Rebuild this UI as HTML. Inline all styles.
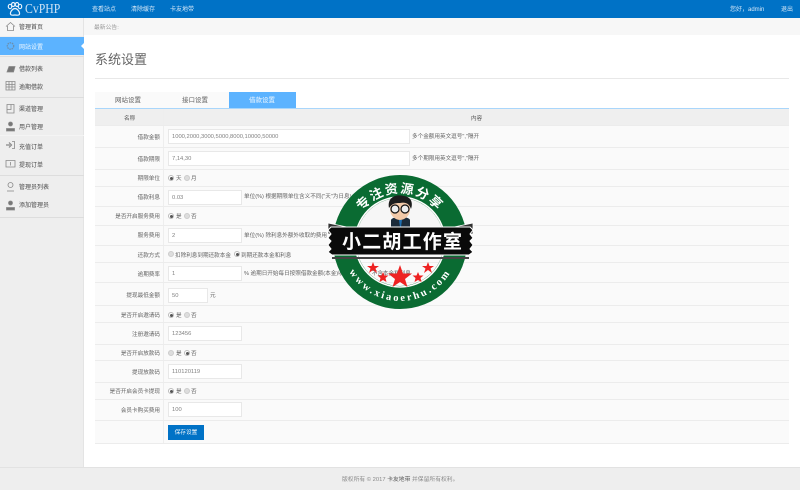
<!DOCTYPE html>
<html lang="zh"><head><meta charset="utf-8"><title>系统设置</title>
<style>
*{box-sizing:border-box}
html,body{margin:0;padding:0}
html{background:#fff}
body{width:800px;height:490px;overflow:hidden;position:relative;background:#fff;font-family:"Liberation Sans","Noto Sans CJK SC",sans-serif;font-size:5.6px;color:#777;filter:blur(.3px)}
div,span,i,b{position:absolute;white-space:nowrap;font-style:normal;font-weight:normal}
#top{left:0;top:0;width:800px;height:18px;background:#0072c6}
.n{top:6px;color:#d5e7f7;font-size:6px;line-height:8px}
#side{left:0;top:18px;width:84px;height:449px;background:#eee;border-right:1px solid #e4e4e4}
.s{left:19px;font-size:6px;line-height:8px;color:#4a4a4a;transform:translateY(1px)}
.sep{left:0;width:84px;height:1px;background:#ddd}
.r{left:95px;width:694px;background:#fafafa;border-bottom:1px solid #ececec}
.r .c{left:68px;top:0;bottom:0;width:1px;background:#eee}
.inp{left:168px;height:15px;background:#fff;border:1px solid #e8e8e8;color:#808080;padding-left:3px;line-height:14px;font-size:5.8px}
.t{color:#626262;line-height:8px;font-size:5.6px;transform:translateY(1px)}
.rd{width:6px;height:6px;border-radius:50%;background:#ddd;border:1px solid #ccc}
.on{background:#fff;border:1px solid #bbb}
.on:after{content:"";position:absolute;left:.5px;top:.5px;width:3px;height:3px;border-radius:50%;background:#555}
</style></head><body>
<div id="top"></div>
<svg style="position:absolute;left:7px;top:2px" width="16" height="15" viewBox="0 0 16 15" fill="none" stroke="#e8f2fb" stroke-width="1.2"><ellipse cx="3" cy="4.5" rx="1.7" ry="2.2"/><ellipse cx="6.2" cy="2.5" rx="1.7" ry="2"/><ellipse cx="10" cy="2.5" rx="1.7" ry="2"/><ellipse cx="13" cy="4.5" rx="1.7" ry="2.2"/><path d="M8 6.5C5.5 6.5 3 10 3.5 12C4 14 6.5 13 8 13C9.5 13 12 14 12.5 12C13 10 10.5 6.5 8 6.5Z"/></svg>
<span style="left:25px;top:1px;font:14px/17px 'Liberation Serif',serif;color:#cfe3f5;transform:scaleX(.84);transform-origin:left center">CvPHP</span>
<span class="n" style="left:92px">查看站点</span><span class="n" style="left:131px">清除缓存</span><span class="n" style="left:170px">卡友地带</span>
<span class="n" style="left:730px">您好，admin</span><span class="n" style="left:781px">退出</span>

<div id="side"></div>
<div style="left:0;top:18px;width:83px;height:18px;background:#f5f5f5"></div>
<div style="left:0;top:37px;width:84px;height:18px;background:#5cb3ff"></div>
<div style="left:81px;top:43px;width:0;height:0;border:3px solid transparent;border-right-color:#fff;border-left:0"></div>
<div class="sep" style="top:56px"></div><div class="sep" style="top:97px"></div><div class="sep" style="top:135px;background:#f4f4f4"></div><div class="sep" style="top:175px"></div><div class="sep" style="top:217px"></div>

<span class="s" style="top:23px">管理首页</span>
<span class="s" style="top:43px;color:#eef7ff">网站设置</span>
<span class="s" style="top:65px">借款列表</span>
<span class="s" style="top:83px">逾期借款</span>
<span class="s" style="top:105px">渠道管理</span>
<span class="s" style="top:123px">用户管理</span>
<span class="s" style="top:143px">充值订单</span>
<span class="s" style="top:161px">提现订单</span>
<span class="s" style="top:183px">管理员列表</span>
<span class="s" style="top:201px">添加管理员</span>

<svg style="position:absolute;left:5px;top:21px" width="11" height="200" viewBox="0 0 11 200" fill="none" stroke="#888" stroke-width=".8">
<path d="M1 5.5L5.5 1.5L10 5.5M2.5 5V9.5H8.5V5"/>
<circle cx="5.5" cy="25" r="3.2" stroke="#6b8fae" stroke-dasharray="1.5 .8" stroke-width="1.3"/>
<path d="M2 51L4 45.5H10L8.5 51Z" fill="#777"/>
<path d="M1 60.5H10V69H1ZM1 63.5H10M1 66H10M4 60.5V69M7 60.5V69"/>
<path d="M2 83.5H9V92H2ZM2 88.5H6V83.5"/>
<circle cx="5.5" cy="103" r="2" fill="#777"/><path d="M1.5 110V107.5H9.5V110Z" fill="#777"/>
<path d="M1 124H5M4 121.5L6.5 124L4 126.5" stroke-width="1.2"/><path d="M7 120.5H9.5V127.5H7"/>
<path d="M1 139.5H10V146H1ZM5.5 141V144.5"/>
<circle cx="5.5" cy="164" r="2.5"/><path d="M2 170H9"/>
<circle cx="5.5" cy="182" r="2" fill="#777"/><path d="M1.5 189V186.5H9.5V189Z" fill="#777"/>
</svg>

<div style="left:84px;top:18px;width:716px;height:17px;background:#f7f7f7"></div>
<span style="left:94px;top:24px;color:#999;line-height:8px;font-size:5.8px">最新公告:</span>
<span style="left:95px;top:51px;font-size:13px;line-height:17px;color:#666">系统设置</span>
<div style="left:95px;top:78px;width:694px;height:1px;background:#e8e8e8"></div>

<div style="left:95px;top:92px;width:134px;height:16px;background:#fafafa"></div>
<div style="left:229px;top:92px;width:67px;height:16px;background:#5cb3ff"></div>
<div style="left:95px;top:108px;width:694px;height:1px;background:#a9d6fb"></div>
<span class="t" style="left:115px;top:96px;font-size:6.5px">网站设置</span><span class="t" style="left:182px;top:96px;font-size:6.5px">接口设置</span><span style="left:249px;top:97px;color:#eef7ff;line-height:8px;font-size:6.5px">借款设置</span>

<div class="r" style="top:109px;height:17px;background:#efefef"><div class="c"></div></div>
<div class="r" style="top:126px;height:22px"><div class="c"></div></div>
<div class="r" style="top:148px;height:22px"><div class="c"></div></div>
<div class="r" style="top:170px;height:17px"><div class="c"></div></div>
<div class="r" style="top:187px;height:20px"><div class="c"></div></div>
<div class="r" style="top:207px;height:19px"><div class="c"></div></div>
<div class="r" style="top:226px;height:20px"><div class="c"></div></div>
<div class="r" style="top:246px;height:17px"><div class="c"></div></div>
<div class="r" style="top:263px;height:20px"><div class="c"></div></div>
<div class="r" style="top:283px;height:23px"><div class="c"></div></div>
<div class="r" style="top:306px;height:17px"><div class="c"></div></div>
<div class="r" style="top:323px;height:22px"><div class="c"></div></div>
<div class="r" style="top:345px;height:16px"><div class="c"></div></div>
<div class="r" style="top:361px;height:22px"><div class="c"></div></div>
<div class="r" style="top:383px;height:17px"><div class="c"></div></div>
<div class="r" style="top:400px;height:21px"><div class="c"></div></div>
<div class="r" style="top:421px;height:23px"><div class="c"></div></div>

<span class="t" style="left:124px;top:114px;color:#505050">名称</span>
<span class="t" style="left:471px;top:114px;color:#505050">内容</span>

<span class="t" style="right:640px;top:133px">借款金额</span>
<div class="inp" style="top:129px;width:242px">1000,2000,3000,5000,8000,10000,50000</div>
<span class="t" style="left:412px;top:132px">多个金额用英文逗号","隔开</span>

<span class="t" style="right:640px;top:155px">借款期限</span>
<div class="inp" style="top:151px;width:242px">7,14,30</div>
<span class="t" style="left:412px;top:154px">多个期限用英文逗号","隔开</span>

<span class="t" style="right:640px;top:174px">期限单位</span>
<i class="rd on" style="left:168px;top:175px"></i><span class="t" style="left:176px;top:174px">天</span><i class="rd" style="left:184px;top:175px"></i><span class="t" style="left:191px;top:174px">月</span>

<span class="t" style="right:640px;top:193px">借款利息</span>
<div class="inp" style="top:190px;width:74px">0.03</div>
<span class="t" style="left:244px;top:192px">单位(%) 根据期限单位含义不同("天"为日息)</span>

<span class="t" style="right:640px;top:212px">是否开启服务费用</span>
<i class="rd on" style="left:168px;top:213px"></i><span class="t" style="left:176px;top:212px">是</span><i class="rd" style="left:184px;top:213px"></i><span class="t" style="left:191px;top:212px">否</span>

<span class="t" style="right:640px;top:231px">服务费用</span>
<div class="inp" style="top:228px;width:74px">2</div>
<span class="t" style="left:244px;top:231px">单位(%) 除利息外额外收取的费用</span>

<span class="t" style="right:640px;top:251px">还款方式</span>
<i class="rd" style="left:168px;top:251px"></i><span class="t" style="left:175px;top:251px">扣除利息到期还款本金</span><i class="rd on" style="left:234px;top:251px"></i><span class="t" style="left:241px;top:251px">到期还款本金和利息</span>

<span class="t" style="right:640px;top:270px">逾期费率</span>
<div class="inp" style="top:266px;width:74px">1</div>
<span class="t" style="left:244px;top:269px">% 逾期日开始每日按照借款金额(本金)收取的费率，不含本金和利息</span>

<span class="t" style="right:640px;top:291px">提现最低金额</span>
<div class="inp" style="top:288px;width:40px">50</div>
<span class="t" style="left:210px;top:291px">元</span>

<span class="t" style="right:640px;top:311px">是否开启邀请码</span>
<i class="rd on" style="left:168px;top:312px"></i><span class="t" style="left:176px;top:311px">是</span><i class="rd" style="left:184px;top:312px"></i><span class="t" style="left:191px;top:311px">否</span>

<span class="t" style="right:640px;top:330px">注册邀请码</span>
<div class="inp" style="top:326px;width:74px">123456</div>

<span class="t" style="right:640px;top:349px">是否开启放款码</span>
<i class="rd" style="left:168px;top:350px"></i><span class="t" style="left:176px;top:349px">是</span><i class="rd on" style="left:184px;top:350px"></i><span class="t" style="left:191px;top:349px">否</span>

<span class="t" style="right:640px;top:368px">提现放款码</span>
<div class="inp" style="top:364px;width:74px">110120119</div>

<span class="t" style="right:640px;top:387px">是否开启会员卡提现</span>
<i class="rd on" style="left:168px;top:388px"></i><span class="t" style="left:176px;top:387px">是</span><i class="rd" style="left:184px;top:388px"></i><span class="t" style="left:191px;top:387px">否</span>

<span class="t" style="right:640px;top:406px">会员卡购买费用</span>
<div class="inp" style="top:402px;width:74px">100</div>

<div style="left:168px;top:425px;width:36px;height:15px;background:#0072c6;color:#eef6fc;text-align:center;line-height:17px;font-size:5.7px">保存设置</div>

<div style="left:0;top:467px;width:800px;height:23px;background:#eee;border-top:1px solid #e2e2e2"></div>
<span style="left:342px;top:476px;color:#888;line-height:8px;font-size:5.8px">版权所有 © 2017 <span style="position:static;color:#555">卡友地带</span> 并保留所有权利。</span>

<svg style="position:absolute;left:320px;top:170px" width="170" height="150" viewBox="0 0 170 150">
<defs>
<path id="a1" d="M 31 72 A 49 49 0 0 1 129 72"/>
<path id="a2" d="M 21 72 A 59 59 0 0 0 139 72"/>
</defs>
<circle cx="80" cy="72" r="55.5" fill="none" stroke="#0a6b32" stroke-width="23"/>
<circle cx="80" cy="72" r="45" fill="none" stroke="#fff" stroke-width="1.5"/>
<path d="M36 72A44 44 0 0 1 124 72Z" fill="#f6f6f6"/>
<text font-size="13" fill="#fff" font-weight="bold" font-family="'Noto Sans CJK SC',sans-serif" letter-spacing="1.6" text-anchor="middle"><textPath href="#a1" startOffset="50%">专注资源分享</textPath></text>
<text font-size="10.5" fill="#fff" font-weight="bold" font-family="'Liberation Serif',serif" letter-spacing="2.3" text-anchor="middle"><textPath href="#a2" startOffset="50%">www.xiaoerhu.com</textPath></text>
<path d="M71 50C72 46 89 46 90 50V57H71Z" fill="#1b2b3a"/>
<ellipse cx="80" cy="39" rx="10" ry="11" fill="#f2c9a8"/>
<path d="M69 38C67 27 76 24 84 26C92 27 93 34 91 39C89 33 85 32 80 33C74 33 72 34 69 38Z" fill="#1c1c1c"/>
<circle cx="75" cy="39" r="4" fill="#eee" stroke="#111" stroke-width="1.2"/><circle cx="85" cy="39" r="4" fill="#eee" stroke="#111" stroke-width="1.2"/>
<path d="M79 50h3l-1 7h-1z" fill="#1f6fb0"/>
<path d="M8 53L36 59V64H8ZM153 53L125 59V64H153Z" fill="#333" stroke="#fff" stroke-width=".8"/>
<path d="M11 57H150L153 60L150 64L153 68L150 71L153 75L150 79L153 82L149 85H12L8 82L11 79L8 75L11 71L8 68L11 64L8 60Z" fill="#0a0a0a" stroke="#fff" stroke-width="1"/>
<path d="M12 88H149" stroke="#444" stroke-width="2"/>
<text x="82" y="78" font-size="19" font-weight="bold" fill="#fff" text-anchor="middle" font-family="'WenQuanYi Zen Hei','Noto Sans CJK SC',sans-serif" textLength="120" lengthAdjust="spacing">小二胡工作室</text>
<g fill="#ee2222">
<path d="M80 95L83 103.5H92L85 109L87.5 117L80 112L72.5 117L75 109L68 103.5H77Z"/>
<path d="M53 92L54.5 96H59L55.5 98.5L57 103L53 100L49 103L50.5 98.5L47 96H51.5Z"/>
<path d="M63 102L64.5 105.5H68.5L65.5 108L66.5 112L63 110L59.5 112L60.5 108L57.5 105.5H61.5Z"/>
<path d="M98 102L99.5 105.5H103.5L100.5 108L101.5 112L98 110L94.5 112L95.5 108L92.5 105.5H96.5Z"/>
<path d="M108 92L109.5 96H114L110.5 98.5L112 103L108 100L104 103L105.5 98.5L102 96H106.500Z"/>
</g>
</svg>
</body></html>
